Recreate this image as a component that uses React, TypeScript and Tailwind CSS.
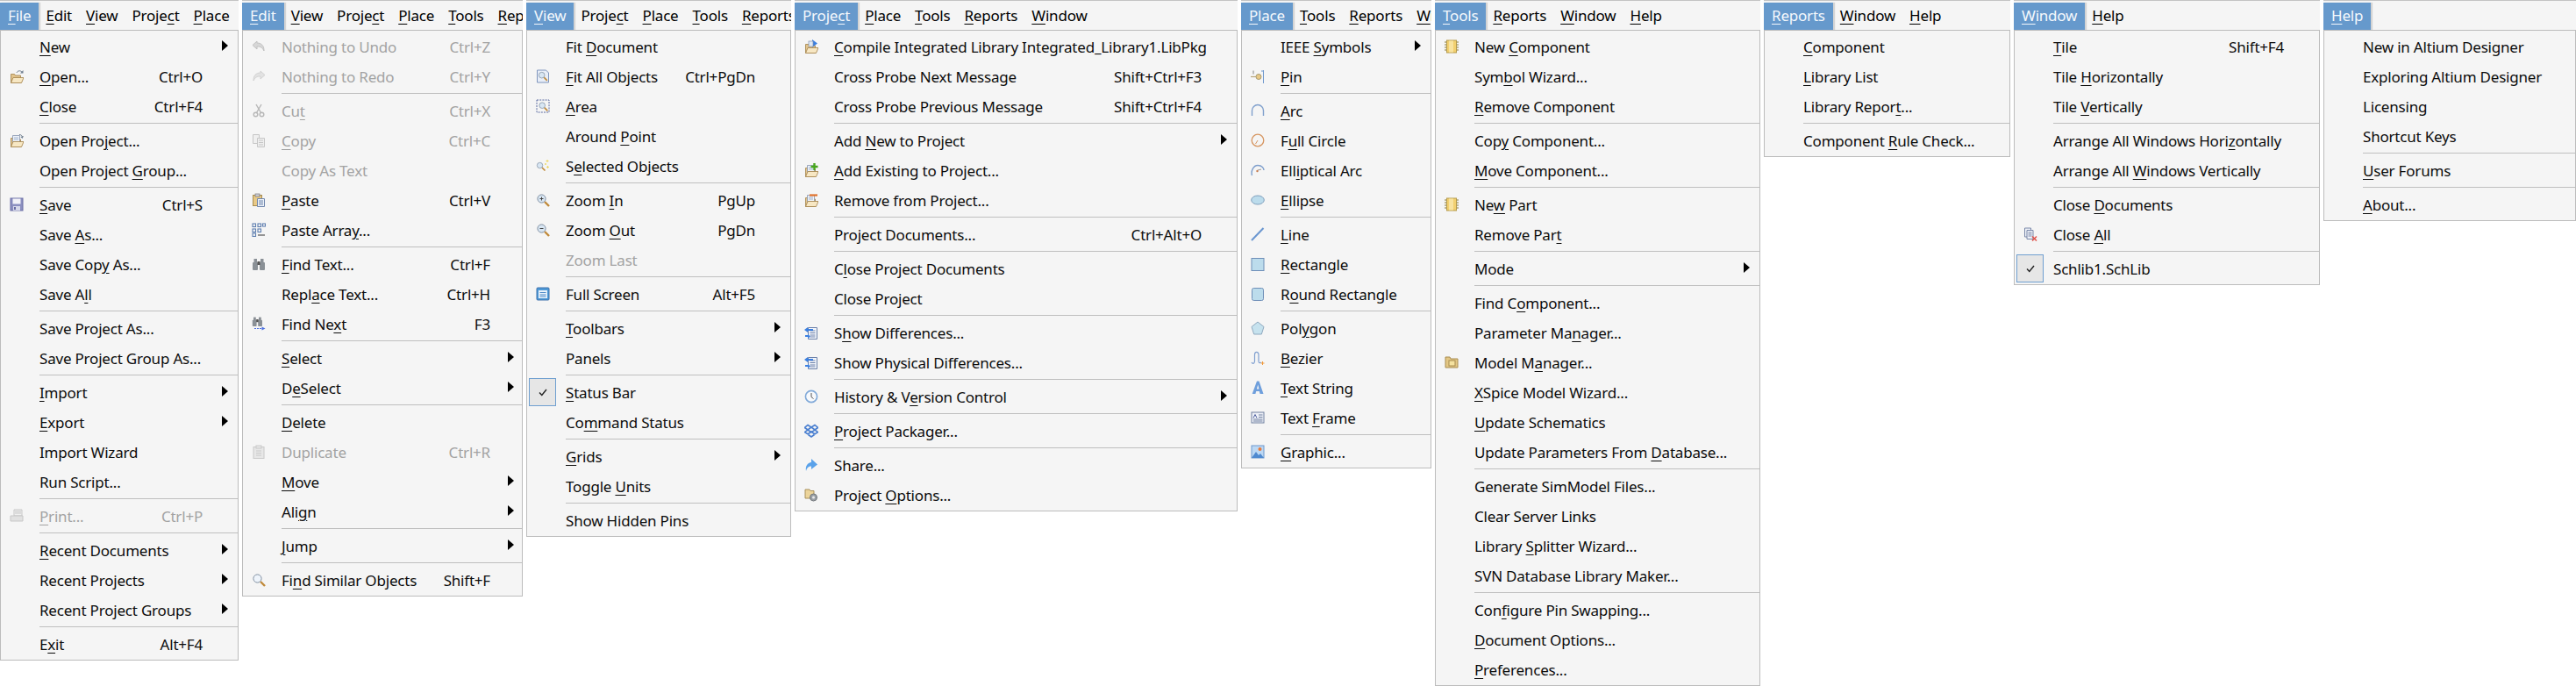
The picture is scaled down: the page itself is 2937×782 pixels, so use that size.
import React from "react";

type Row =
  | "-"
  | { t: string; s?: string; sub?: boolean; off?: boolean; icon?: string; chk?: boolean };

const Fold = ({ page = true }: { page?: boolean }) => (
  <g>
    <path d="M1.500 15.500V5.500h4l1 1.500h6v8.500z" fill="#e2c48c" stroke="#a98a55" strokeWidth=".9" />
    {page && <path d="M3.500 2.500h8v8h-8z" fill="#eef2f8" stroke="#8493ad" strokeWidth=".8" />}
    {page && <path d="M5 5h5M5 7h5" stroke="#8ea4c6" strokeWidth=".8" />}
    <path d="M1.500 15.500l2.500-6h12l-2.500 6z" fill="#f7e7c3" stroke="#a98a55" strokeWidth=".9" />
  </g>
);
const Mag = ({ c = "#d8e6f3" }: { c?: string }) => (
  <g>
    <path d="M10 10l5 5" stroke="#c08a3a" strokeWidth="2.400" />
    <circle cx="6.500" cy="6.500" r="4.600" fill={c} stroke="#7f8ea0" strokeWidth="1" />
  </g>
);
const Bino = ({ c = "#8a9096" }: { c?: string }) => (
  <g fill={c}>
    <rect x="1" y="6" width="6" height="9" rx="1" />
    <rect x="9" y="6" width="6" height="9" rx="1" />
    <rect x="2.500" y="2" width="3.500" height="5" />
    <rect x="10" y="2" width="3.500" height="5" />
    <rect x="6.500" y="5" width="3" height="4" fill="#555" />
  </g>
);
const Chip = () => (
  <g>
    <path d="M0 3h3M0 6h3M0 9h3M0 12h3M13 3h3M13 6h3M13 9h3M13 12h3" stroke="#8a7a3a" strokeWidth="1" />
    <rect x="2.500" y="1" width="11" height="14" fill="#f2d070" stroke="#b49a4a" />
    <rect x="5" y="1.500" width="5" height="13" fill="#f8e3a0" />
  </g>
);

function Glyph({ n }: { n: string }) {
  switch (n) {
    case "open":
      return (<g><Fold page={false} /><path d="M8 4c1-2.500 4-3 6-1" fill="none" stroke="#6f7f90" strokeWidth="1" /><path d="M15.500 1v3.500h-3.500z" fill="#6f7f90" /></g>);
    case "openp":
      return (<g><Fold /><path d="M11 1.500c2 0 3 1 3.500 2.500" fill="none" stroke="#6f7f90" /><path d="M16 3l-1.500 3-2-2z" fill="#6f7f90" /></g>);
    case "save":
      return (<g><rect x="1" y="1" width="14" height="14" fill="#8b8fc0" stroke="#6a6ea5" /><rect x="3.500" y="1.500" width="9" height="6" fill="#f2f2f8" /><rect x="4" y="10" width="8" height="5" fill="#d6d8ea" /><rect x="5" y="11" width="2" height="3" fill="#6a6ea5" /></g>);
    case "print":
      return (<g fill="#eee" stroke="#bdbdbd"><path d="M5 1h9v7H5z" /><path d="M1 8h14v6H1z" fill="#ddd" /><path d="M6 5h7M6 3h7" /></g>);
    case "undo":
      return (<path d="M6 2L1 6.500 6 11V8c4 0 6 1 8 5 0-6-3-9-8-9z" fill="#d0d0d0" stroke="#b5b5b5" />);
    case "redo":
      return (<path d="M10 2l5 4.500-5 4.500V8c-4 0-6 1-8 5 0-6 3-9 8-9z" fill="#dedede" stroke="#cacaca" />);
    case "cut":
      return (<g fill="none" stroke="#a8a8a8" strokeWidth="1.400"><circle cx="4.500" cy="12.500" r="2.300" /><circle cx="11.500" cy="12.500" r="2.300" /><path d="M5.500 10.500L11 1M10.500 10.500L5 1" /></g>);
    case "copy":
      return (<g fill="#eeeeee" stroke="#bbbbbb"><path d="M1.500 1.500h7v10h-7z" /><path d="M6.500 5.500h8v10h-8z" /><path d="M8 8h5M8 10.500h5M8 13h5" /></g>);
    case "paste":
      return (<g><rect x="1.500" y="2.500" width="10" height="12" fill="#e8c987" stroke="#a88c50" /><rect x="4" y="1" width="5" height="3" fill="#d0d0d8" stroke="#777" strokeWidth=".7" /><path d="M6.500 6.500h8v9h-8z" fill="#eef3fa" stroke="#6f86ac" /><path d="M8 9h5M8 11h5M8 13h5" stroke="#6f86ac" /></g>);
    case "pastearr":
      return (<g fill="none" stroke="#5f7fb0" strokeWidth="1.100"><rect x="1" y="1" width="3.500" height="3.500" /><rect x="7" y="1" width="3.500" height="3.500" /><rect x="12.500" y="1" width="3" height="3" /><rect x="1" y="7" width="3.500" height="3.500" /><rect x="7" y="7" width="3.500" height="3.500" /><rect x="1" y="12" width="3.500" height="3.500" /><path d="M7 14h8" stroke="#444" /></g>);
    case "find":
      return (<Bino />);
    case "findnext":
      return (<g><g transform="translate(0 -1) scale(.8)"><Bino /></g><path d="M3 13.500h9" stroke="#4a6fe0" strokeDasharray="2 1" /><path d="M11.500 11.500l4 2-4 2z" fill="#4a6fe0" /></g>);
    case "dup":
      return (<g fill="#e4e4e4" stroke="#c0c0c0"><rect x="2" y="2.500" width="12" height="13" /><rect x="5" y="1" width="6" height="3" /><path d="M5 7h6M5 9.500h6M5 12h6" /></g>);
    case "similar":
      return (<Mag c="#eef4fb" />);
    case "fitall":
      return (<g><path d="M1.500 1h10l3 3v11h-13z" fill="#e8eef8" stroke="#7f95bc" /><g transform="translate(2 2) scale(.72)"><Mag /></g></g>);
    case "area":
      return (<g><rect x="1" y="1" width="14" height="14" fill="none" stroke="#5a6aa0" strokeDasharray="2 1.200" /><g transform="translate(2.500 2.500) scale(.72)"><Mag /></g></g>);
    case "sel":
      return (<g><g transform="translate(0 3) scale(.7)"><Mag /></g><path d="M13 1v3M11.500 2.500h3M13.500 8v3M12 9.500h3" stroke="#eed86a" /><circle cx="11" cy="6" r="1" fill="#eed86a" /></g>);
    case "zoomin":
      return (<g><Mag /><path d="M4.500 6.500h4M6.500 4.500v4" stroke="#444" /></g>);
    case "zoomout":
      return (<g><Mag /><path d="M4.500 6.500h4" stroke="#444" /></g>);
    case "full":
      return (<g><rect x="1" y="1" width="14" height="14" rx="1" fill="#4f9ad8" stroke="#3f72ac" /><rect x="3" y="4" width="10" height="9" fill="#e9f2fb" /><path d="M4.500 6.500h7M4.500 9h7M4.500 11h7" stroke="#4f8ac8" /></g>);
    case "compile":
      return (<g><Fold page={false} /><path d="M9 0l6 4.500-6 4.500z" fill="#3a7fe0" /><rect x="5" y="2" width="5" height="6" fill="#dfe8f4" stroke="#8493ad" strokeWidth=".7" /></g>);
    case "addex":
      return (<g><Fold /><path d="M11.500 0v8M7.500 4h8" stroke="#47a51c" strokeWidth="2.400" /></g>);
    case "remove":
      return (<g><Fold /><path d="M6 2.500h9" stroke="#e0702a" strokeWidth="2.200" /></g>);
    case "diff":
      return (<g><path d="M4.500 2.500h10v13h-10z" fill="#f4f7fc" stroke="#6a7fa8" /><path d="M6.500 6h6M6.500 8.500h6M6.500 11h6M6.500 13h6" stroke="#6a7fa8" /><path d="M0 5l4-3v2h6v2H4v2zM4 10l3 2.500L4 15v-2H1v-2h3z" fill="#3a7fe0" /></g>);
    case "hist":
      return (<g><circle cx="8" cy="8" r="6.600" fill="#f7f9fc" stroke="#7fa8d8" strokeWidth="1.600" /><path d="M8 4v4.500l2.500 2" fill="none" stroke="#555" /></g>);
    case "pack":
      return (<g fill="none" stroke="#4a7fd0" strokeWidth="1.600"><path d="M4 1.500l4 2.500-4 3-3.500-2.500zM12 1.500l-4 2.500 4 3 3.500-2.500zM4 7l4 2.800L12 7l3.500 2.600-3.500 2.200-4-2.500-4 2.500-3.500-2.200z" /><path d="M4.500 12.500L8 15l3.500-2.500" /></g>);
    case "share":
      return (<path d="M8 1l7 6.500L8 13V9.500C5 9.500 3 11 2 15c-1-6 2-9.500 6-10z" fill="#5aa2ea" />);
    case "options":
      return (<g><path d="M1 2h5l1 1.500h4V12H1z" fill="#ecd49a" stroke="#a8905a" /><circle cx="10.500" cy="11" r="4" fill="#9aa0a6" stroke="#72767a" /><circle cx="10.500" cy="11" r="1.500" fill="#e8e8e8" /></g>);
    case "pin":
      return (<g><path d="M0 8.500h6" stroke="#b8a67a" strokeWidth="1.200" /><circle cx="9" cy="8.500" r="3" fill="#e8c987" stroke="#a89a70" /><path d="M14.500 1v15" stroke="#6f98cc" /><path d="M12 2h2.500" stroke="#6f98cc" /><path d="M3 1.500v4" stroke="#888" /></g>);
    case "arc":
      return (<path d="M1.500 14V8a6.500 6.500 0 0113 0v6" fill="none" stroke="#7f9fcc" strokeWidth="1.400" />);
    case "circle":
      return (<g><circle cx="8" cy="8" r="6.800" fill="none" stroke="#d69560" strokeWidth="1.300" /><path d="M8 8l-2.500 4" stroke="#d69560" /></g>);
    case "earc":
      return (<g><path d="M1.500 14C0 9 3 2.500 8 2.500S15 6 15 8" fill="none" stroke="#7f9fcc" strokeWidth="1.400" /><circle cx="7.500" cy="9" r="1.200" fill="#c87c50" /><path d="M8 8l4-1" stroke="#999" /></g>);
    case "ellipse":
      return (<ellipse cx="8" cy="8" rx="7.300" ry="5" fill="#bcdcec" stroke="#7f9fbc" />);
    case "line":
      return (<path d="M1 15L14.500 1" stroke="#6a96d0" strokeWidth="2" />);
    case "rect":
      return (<rect x="1" y="1.500" width="14" height="14" fill="#bcdcec" stroke="#6f8fb8" />);
    case "rrect":
      return (<rect x="1.500" y="1.500" width="13" height="14" rx="2" fill="#bcdcec" stroke="#6f8fb8" />);
    case "poly":
      return (<path d="M8 1l7 5.500-2.700 8.500H3.700L1 6.500z" fill="#c6e2ee" stroke="#8fa9bf" />);
    case "bezier":
      return (<g><path d="M1 13c1 2 3 2 3.500-1V4c.3-3.500 4-3.500 4.500 0v8c.3 2 1.500 2 3 1" fill="none" stroke="#7f9fd0" strokeWidth="1.200" /><path d="M13.500 12v4M11.500 14h4" stroke="#f0983a" /></g>);
    case "textstr":
      return (<path d="M7 .5h2.500L14.500 15H10.600l-.8-3H6.200l-.8 3H1.700zM8.200 4.500L6.900 9.500h2.600z" fill="#6f9fdc" fillRule="evenodd" />);
    case "frame":
      return (<g><rect x="1" y="2" width="14" height="12" fill="#eef1f8" stroke="#7080a0" /><path d="M9 5h4.500M9 7.500h4.500M3 10h10.500M3 12h10.500" stroke="#7080a0" /><path d="M3 8.500l2-4 2 4" fill="none" stroke="#5060a0" /></g>);
    case "graphic":
      return (<g><rect x="1" y="1" width="14" height="14" fill="#bcd8f4" stroke="#6f98cc" /><path d="M1 15l5-7 3 4 2-2 4 5z" fill="#4f8ad0" /><circle cx="10.500" cy="5" r="2" fill="#e87a3a" /></g>);
    case "chip":
      return (<Chip />);
    case "model":
      return (<g><path d="M1 14V2h5l1 2h8v10z" fill="#e3c785" stroke="#a88c50" /><rect x="5" y="6" width="7" height="6" fill="#f5e2a0" stroke="#a88c50" /></g>);
    case "closeall":
      return (<g><path d="M1.500 1h7v10h-7z" fill="#eef1f8" stroke="#7a88a8" /><path d="M4 3.500h7v10H4z" fill="#eef1f8" stroke="#7a88a8" /><path d="M5.500 6h4M5.500 8h4M5.500 10h4" stroke="#7a88a8" /><path d="M10 10.500l5 5M15 10.500l-5 5" stroke="#e0524a" strokeWidth="1.500" /></g>);
  }
  return null;
}

const Icon = ({ n }: { n: string }) => (
  <svg width="16" height="16" viewBox="0 0 16 16" className="block">
    <Glyph n={n} />
  </svg>
);

function Label({ t }: { t: string }) {
  const i = t.indexOf("~");
  if (i < 0) return <>{t}</>;
  return (
    <>
      {t.slice(0, i)}
      <span className="underline underline-offset-[3px] decoration-1">{t[i + 1]}</span>
      {t.slice(i + 2)}
    </>
  );
}

const bar: Record<string, string> = {
  File: "~File",
  Edit: "~Edit",
  View: "~View",
  Project: "Proje~ct",
  Place: "~Place",
  Tools: "~Tools",
  Reports: "~Reports",
  Window: "~Window",
  Help: "~Help",
};

const panels: {
  active: string;
  rest: string[];
  w: string;
  sc: string;
  arrow: string;
  rows: Row[];
}[] = [
  {
    active: "File",
    rest: ["Edit", "View", "Project", "Place"],
    w: "w-[272px]",
    sc: "pr-[40px]",
    arrow: "pr-[11px]",
    rows: [
      { t: "~New", sub: true },
      { t: "~Open...", s: "Ctrl+O", icon: "open" },
      { t: "~Close", s: "Ctrl+F4" },
      "-",
      { t: "Open Pro~ject...", icon: "openp" },
      { t: "Open Project ~Group..." },
      "-",
      { t: "~Save", s: "Ctrl+S", icon: "save" },
      { t: "Save ~As..." },
      { t: "Save Cop~y As..." },
      { t: "Save A~ll" },
      "-",
      { t: "Save Project As..." },
      { t: "Save Project Group As..." },
      "-",
      { t: "~Import", sub: true },
      { t: "~Export", sub: true },
      { t: "Import Wizard" },
      { t: "Run Script..." },
      "-",
      { t: "~Print...", s: "Ctrl+P", off: true, icon: "print" },
      "-",
      { t: "~Recent Documents", sub: true },
      { t: "Recent Projects", sub: true },
      { t: "Recent Project Groups", sub: true },
      "-",
      { t: "E~xit", s: "Alt+F4" },
    ],
  },
  {
    active: "Edit",
    rest: ["View", "Project", "Place", "Tools", "Reports"],
    w: "w-[320px]",
    sc: "pr-[36px]",
    arrow: "pr-[9px]",
    rows: [
      { t: "Nothing to Undo", s: "Ctrl+Z", off: true, icon: "undo" },
      { t: "Nothing to Redo", s: "Ctrl+Y", off: true, icon: "redo" },
      "-",
      { t: "Cu~t", s: "Ctrl+X", off: true, icon: "cut" },
      { t: "~Copy", s: "Ctrl+C", off: true, icon: "copy" },
      { t: "Copy As Text", off: true },
      { t: "~Paste", s: "Ctrl+V", icon: "paste" },
      { t: "Paste Arra~y...", icon: "pastearr" },
      "-",
      { t: "~Find Text...", s: "Ctrl+F", icon: "find" },
      { t: "Repl~ace Text...", s: "Ctrl+H" },
      { t: "Find Ne~xt", s: "F3", icon: "findnext" },
      "-",
      { t: "~Select", sub: true },
      { t: "D~eSelect", sub: true },
      "-",
      { t: "~Delete" },
      { t: "Duplicate", s: "Ctrl+R", off: true, icon: "dup" },
      { t: "~Move", sub: true },
      { t: "Ali~gn", sub: true },
      "-",
      { t: "~Jump", sub: true },
      "-",
      { t: "Fi~nd Similar Objects", s: "Shift+F", icon: "similar" },
    ],
  },
  {
    active: "View",
    rest: ["Project", "Place", "Tools", "Reports"],
    w: "w-[302px]",
    sc: "pr-[40px]",
    arrow: "pr-[11px]",
    rows: [
      { t: "Fit ~Document" },
      { t: "~Fit All Objects", s: "Ctrl+PgDn", icon: "fitall" },
      { t: "~Area", icon: "area" },
      { t: "Around ~Point" },
      { t: "S~elected Objects", icon: "sel" },
      "-",
      { t: "Zoom ~In", s: "PgUp", icon: "zoomin" },
      { t: "Zoom ~Out", s: "PgDn", icon: "zoomout" },
      { t: "Zoom Last", off: true },
      "-",
      { t: "Full Screen", s: "Alt+F5", icon: "full" },
      "-",
      { t: "~Toolbars", sub: true },
      { t: "Panels", sub: true },
      "-",
      { t: "~Status Bar", chk: true },
      { t: "Co~mmand Status" },
      "-",
      { t: "~Grids", sub: true },
      { t: "Toggle ~Units" },
      "-",
      { t: "Show Hidden Pins" },
    ],
  },
  {
    active: "Project",
    rest: ["Place", "Tools", "Reports", "Window"],
    w: "w-[505px]",
    sc: "pr-[40px]",
    arrow: "pr-[11px]",
    rows: [
      { t: "~Compile Integrated Library Integrated_Library1.LibPkg", icon: "compile" },
      { t: "Cross Probe Next Message", s: "Shift+Ctrl+F3" },
      { t: "Cross Probe Previous Message", s: "Shift+Ctrl+F4" },
      "-",
      { t: "Add ~New to Project", sub: true },
      { t: "~Add Existing to Project...", icon: "addex" },
      { t: "Remove from Project...", icon: "remove" },
      "-",
      { t: "Project Documents...", s: "Ctrl+Alt+O" },
      "-",
      { t: "C~lose Project Documents" },
      { t: "Close Project" },
      "-",
      { t: "S~how Differences...", icon: "diff" },
      { t: "Show Physical Differences...", icon: "diff" },
      "-",
      { t: "History & V~ersion Control", icon: "hist", sub: true },
      "-",
      { t: "~Project Packager...", icon: "pack" },
      "-",
      { t: "Share...", icon: "share" },
      { t: "Project ~Options...", icon: "options" },
    ],
  },
  {
    active: "Place",
    rest: ["Tools", "Reports", "Window"],
    w: "w-[217px]",
    sc: "pr-[40px]",
    arrow: "pr-[11px]",
    rows: [
      { t: "IEEE ~Symbols", sub: true },
      { t: "~Pin", icon: "pin" },
      "-",
      { t: "~Arc", icon: "arc" },
      { t: "F~ull Circle", icon: "circle" },
      { t: "Ell~iptical Arc", icon: "earc" },
      { t: "~Ellipse", icon: "ellipse" },
      "-",
      { t: "~Line", icon: "line" },
      { t: "~Rectangle", icon: "rect" },
      { t: "R~ound Rectangle", icon: "rrect" },
      "-",
      { t: "Pol~ygon", icon: "poly" },
      { t: "~Bezier", icon: "bezier" },
      { t: "~Text String", icon: "textstr" },
      { t: "Text ~Frame", icon: "frame" },
      "-",
      { t: "~Graphic...", icon: "graphic" },
    ],
  },
  {
    active: "Tools",
    rest: ["Reports", "Window", "Help"],
    w: "w-[371px]",
    sc: "pr-[40px]",
    arrow: "pr-[11px]",
    rows: [
      { t: "New ~Component", icon: "chip" },
      { t: "Sym~bol Wizard..." },
      { t: "~Remove Component" },
      "-",
      { t: "Cop~y Component..." },
      { t: "~Move Component..." },
      "-",
      { t: "Ne~w Part", icon: "chip" },
      { t: "Remove Par~t" },
      "-",
      { t: "Mode", sub: true },
      "-",
      { t: "Find C~omponent..." },
      { t: "Parameter Ma~nager..." },
      { t: "Model M~anager...", icon: "model" },
      { t: "~XSpice Model Wizard..." },
      { t: "~Update Schematics" },
      { t: "Update Parameters From ~Database..." },
      "-",
      { t: "Generate SimModel Files..." },
      { t: "Clear Server Links" },
      { t: "Library ~Splitter Wizard..." },
      { t: "SVN Database Library Maker..." },
      "-",
      { t: "Con~figure Pin Swapping..." },
      { t: "~Document Options..." },
      { t: "~Preferences..." },
    ],
  },
  {
    active: "Reports",
    rest: ["Window", "Help"],
    w: "w-[281px]",
    sc: "pr-[40px]",
    arrow: "pr-[11px]",
    rows: [
      { t: "~Component" },
      { t: "~Library List" },
      { t: "Library Repor~t..." },
      "-",
      { t: "Component ~Rule Check..." },
    ],
  },
  {
    active: "Window",
    rest: ["Help"],
    w: "w-[349px]",
    sc: "pr-[40px]",
    arrow: "pr-[11px]",
    rows: [
      { t: "~Tile", s: "Shift+F4" },
      { t: "Tile ~Horizontally" },
      { t: "Tile ~Vertically" },
      "-",
      { t: "Arrange All Windows Hori~zontally" },
      { t: "Arrange All ~Windows Vertically" },
      "-",
      { t: "Close ~Documents" },
      { t: "Close ~All", icon: "closeall" },
      "-",
      { t: "Schlib1.SchLib", chk: true },
    ],
  },
  {
    active: "Help",
    rest: [],
    w: "w-[288px]",
    sc: "pr-[40px]",
    arrow: "pr-[11px]",
    rows: [
      { t: "New in Altium Designer" },
      { t: "Exploring Altium Designer" },
      { t: "Licensing" },
      { t: "Shortcut Keys" },
      "-",
      { t: "~User Forums" },
      "-",
      { t: "~About..." },
    ],
  },
];

function Panel({ p }: { p: (typeof panels)[number] }) {
  return (
    <div className={`${p.w} shrink-0 flex flex-col items-stretch`}>
      <div className="h-[34px] bg-[#f5f5f5] border-t border-[#c4c4c4] flex pt-[2px] overflow-hidden whitespace-nowrap">
        <div className="h-[31px] bg-[#6699cc] text-[#f4f8fc] px-[9px] pb-[2px] flex items-center shadow-[2px_0_1px_#d4d4d4]">
          <span><Label t={bar[p.active]} /></span>
        </div>
        <div className="flex pl-[8px] gap-[16px] pb-[2px] items-center h-[31px]">
          {p.rest.map((r) => (
            <span key={r}><Label t={bar[r]} /></span>
          ))}
        </div>
      </div>
      <div className="bg-[#f5f5f5] border border-[#bcbcbc] pt-[2px]">
        {p.rows.map((r, i) =>
          r === "-" ? (
            <div key={i} className="h-[5px] pt-px pl-[44px]">
              <div className="h-px bg-[#bfbfbf]" />
            </div>
          ) : (
            <div
              key={i}
              className={`h-[34px] flex items-center pb-[2px] pl-[44px] whitespace-nowrap ${r.sub ? p.arrow : p.sc} ${r.off ? "text-[#a3a3a3]" : "text-[#0c0c0c]"}`}
            >
              {r.chk ? (
                <div className="w-[31px] h-[32px] -ml-[42px] mr-[11px] self-start bg-[#e6e6e6] border border-[#6f9fd0] flex items-center justify-center">
                  <svg width="10" height="9" viewBox="0 0 10 9"><path d="M1 4.500L3.800 7.500 9 1" fill="none" stroke="#222" strokeWidth="1.400" /></svg>
                </div>
              ) : r.icon ? (
                <div className={`w-[16px] h-[16px] -ml-[34px] mr-[18px] ${r.off ? "opacity-80" : ""}`}>
                  <Icon n={r.icon} />
                </div>
              ) : null}
              <span className="flex-1 leading-none"><Label t={r.t} /></span>
              {r.s && <span className="leading-none">{r.s}</span>}
              {r.sub && (
                <svg width="7" height="12" viewBox="0 0 7 12" className="-mt-[2px]"><path d="M0 0l7 6-7 6z" fill="#000" /></svg>
              )}
            </div>
          ),
        )}
      </div>
    </div>
  );
}

export default function App() {
  return (
    <div className="w-[2937px] h-[782px] overflow-hidden bg-white flex items-start gap-[4px] text-[17px] tracking-[-0.2px] font-['Noto_Sans',sans-serif]">
      {panels.map((p) => (
        <Panel key={p.active} p={p} />
      ))}
    </div>
  );
}
